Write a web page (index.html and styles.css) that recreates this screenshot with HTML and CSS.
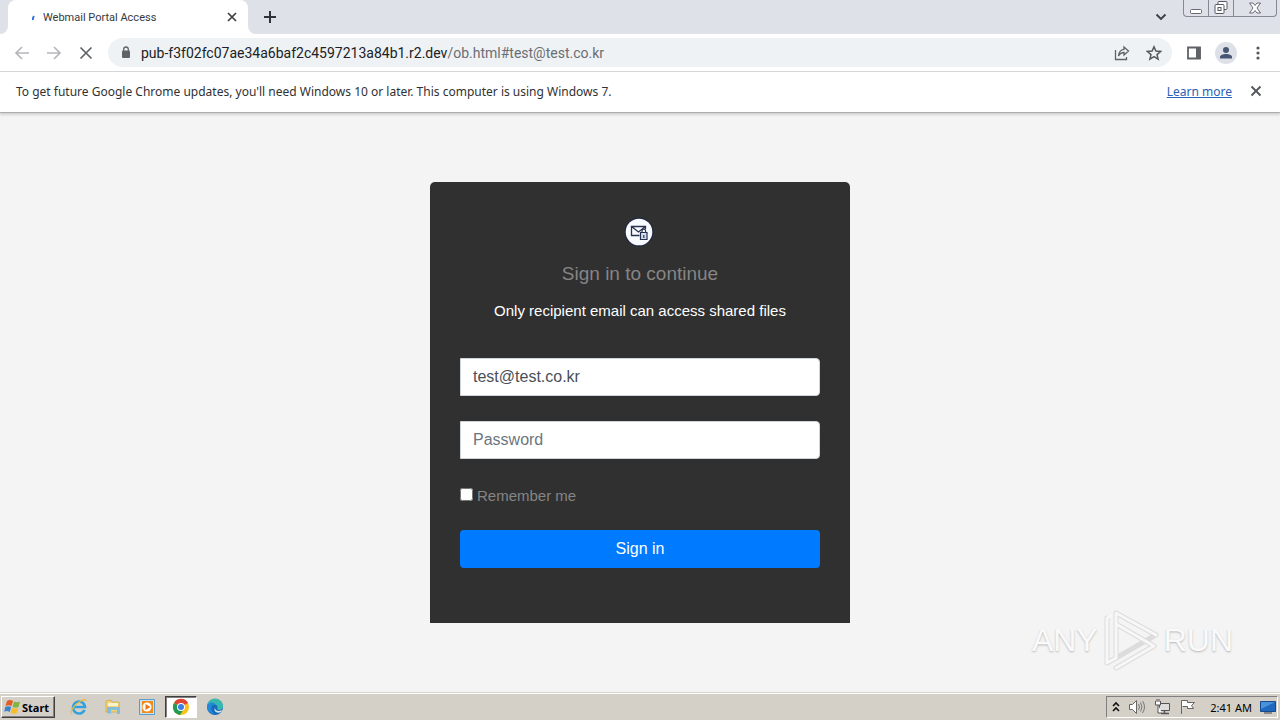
FILE: index.html
```html
<!DOCTYPE html>
<html lang="en">
<head>
<meta charset="utf-8">
<title>Webmail Portal Access</title>
<link rel="stylesheet" href="styles.css">
</head>
<body>
<header class="tabstrip">
  <div class="prev-tab"></div>
  <div class="tab">
    <svg class="spinner" width="16" height="16" viewBox="0 0 16 16"><path d="M6 11Q5.600 9 7 7" fill="none" stroke="#3474d4" stroke-width="2"/></svg>
    <span class="tab-title">Webmail Portal Access</span>
    <button class="icon-btn" aria-label="Close tab"><svg width="10" height="10" viewBox="0 0 10 10"><path d="M1 1l8 8M9 1l-8 8" stroke="#3c4043" stroke-width="1.700"/></svg></button>
  </div>
  <div class="strip-rest">
    <button class="icon-btn" aria-label="New tab"><svg width="14" height="14" viewBox="0 0 14 14"><path d="M7 1v12M1 7h12" stroke="#303338" stroke-width="2"/></svg></button>
    <button class="icon-btn tab-search" aria-label="Search tabs"><svg width="12" height="8" viewBox="0 0 12 8"><path d="M1.500 1.500L6 6l4.500-4.500" fill="none" stroke="#3c4043" stroke-width="1.900"/></svg></button>
    <div class="window-buttons">
      <button class="win-btn" aria-label="Minimize"><svg width="13" height="5" viewBox="0 0 13 5"><rect x=".5" y=".5" width="11" height="4" rx="1" fill="#fff" stroke="#666a73"/></svg></button>
      <button class="win-btn" aria-label="Restore"><svg width="14" height="13" viewBox="0 0 14 13"><g fill="#fff" stroke="#555963"><rect x="4" y=".5" width="9" height="8" rx="1"/><rect x="1" y="3.500" width="9" height="9" rx="1"/><rect x="4" y="6.500" width="3" height="3"/></g></svg></button>
      <button class="win-btn win-close" aria-label="Close"><svg width="14" height="12" viewBox="0 0 14 12"><path d="M1.500 1h3.500l2 2.500L9 1h3.500L9 6l3.500 5H9L7 8.500 5 11H1.500L5 6z" fill="#fff" stroke="#666a73"/></svg></button>
    </div>
  </div>
</header>
<nav class="toolbar">
  <button class="icon-btn" aria-label="Back"><svg width="16" height="16" viewBox="0 0 16 16"><path d="M15 8H2M8 2L2 8l6 6" fill="none" stroke="#b5b7ba" stroke-width="1.700"/></svg></button>
  <button class="icon-btn" aria-label="Forward"><svg width="16" height="16" viewBox="0 0 16 16"><path d="M1 8h13M8 2l6 6-6 6" fill="none" stroke="#b5b7ba" stroke-width="1.700"/></svg></button>
  <button class="icon-btn" aria-label="Stop"><svg width="16" height="16" viewBox="0 0 16 16"><path d="M2.500 2.500l11 11M13.500 2.500l-11 11" stroke="#5f6368" stroke-width="1.700"/></svg></button>
  <div class="omnibox">
    <svg width="10" height="13" viewBox="0 0 10 13"><rect x="1" y="4.500" width="8" height="7.500" rx="1" fill="#5f6368"/><path d="M2.700 5V3.300a2.300 2.300 0 0 1 4.600 0V5" fill="none" stroke="#5f6368" stroke-width="1.300"/></svg>
    <span class="url">pub-f3f02fc07ae34a6baf2c4597213a84b1.r2.dev<span class="url-path">/ob.html#test@test.co.kr</span></span>
    <button class="icon-btn" aria-label="Share"><svg width="16" height="16" viewBox="0 0 16 16"><path d="M1.500 5v9.500h11V12M10 2l4.500 4L10 10V7.500Q6.500 7.500 4.500 11 5 5 10 4.300z" fill="none" stroke="#5f6368" stroke-width="1.300"/></svg></button>
    <button class="icon-btn" aria-label="Bookmark"><svg width="16" height="16" viewBox="0 0 16 16"><path d="M8 1.800l1.900 4.300 4.700.4-3.600 3.100 1.100 4.600L8 11.700l-4.100 2.500L5 9.600 1.400 6.500l4.700-.4z" fill="none" stroke="#55585d" stroke-width="1.500"/></svg></button>
  </div>
  <button class="icon-btn" aria-label="Side panel"><svg width="16" height="16" viewBox="0 0 16 16"><path d="M2 2.500h12v11H2z" fill="none" stroke="#5f6368" stroke-width="1.800"/><path d="M10 2h4.500v12H10z" fill="#5f6368"/></svg></button>
  <button class="icon-btn" aria-label="Profile"><svg width="22" height="22" viewBox="0 0 22 22"><circle cx="11" cy="11" r="11" fill="#dde1e7"/><circle cx="11" cy="8" r="3" fill="#485575"/><path d="M5 16.500v-1.500c0-2 3-3 6-3s6 1 6 3v1.500z" fill="#485575"/></svg></button>
  <button class="icon-btn" aria-label="Menu"><svg width="16" height="16" viewBox="0 0 16 16" fill="#55585d"><circle cx="8" cy="3" r="1.600"/><circle cx="8" cy="8" r="1.600"/><circle cx="8" cy="13" r="1.600"/></svg></button>
</nav>
<aside class="infobar">
  <p class="infobar-text">To get future Google Chrome updates, you'll need Windows 10 or later. This computer is using Windows 7.</p>
  <a class="learn-more" href="#">Learn more</a>
  <button class="icon-btn" aria-label="Dismiss"><svg width="12" height="12" viewBox="0 0 12 12"><path d="M1.500 1.500l9 9M10.500 1.500l-9 9" stroke="#55585d" stroke-width="1.900"/></svg></button>
</aside>
<main class="page">
  <form class="card">
    <svg class="logo" width="30" height="30" viewBox="0 0 30 30"><circle cx="15" cy="15" r="14.500" fill="#1d2942"/><circle cx="15" cy="15" r="13.300" fill="#f8faff"/><path d="M15.500 18.500H7.500v-9h14V12M7.500 9.500l7 5.500 7-5.500" fill="none" stroke="#26334f" stroke-width="1.300"/><path d="M16.500 15.500h6.500v7h-6.500z" fill="#d5dcec" stroke="#26334f" stroke-width="1.200"/><path d="M18 15.500V14a1.800 1.800 0 0 1 3.600 0v1.500M19.800 18v3" fill="none" stroke="#26334f" stroke-width="1.200"/></svg>
    <h1 class="title">Sign in to continue</h1>
    <p class="subtitle">Only recipient email can access shared files</p>
    <input class="field" type="email" aria-label="Email" value="test@test.co.kr">
    <input class="field" type="password" aria-label="Password" placeholder="Password">
    <label class="remember"><input class="check" type="checkbox">Remember me</label>
    <button class="submit" type="submit">Sign in</button>
  </form>
  <div class="watermark">
    <span>ANY</span>
    <svg width="58" height="64" viewBox="0 0 58 64"><g fill="none" stroke-linejoin="round" stroke-linecap="round"><path d="M14 50V5l40 22M14 16l38 22M5 10v45M5 55l9-5 38-22M14 60l38-22" stroke="#dcdcdc" stroke-width="5"/><path d="M14 50V5l40 22M14 16l38 22M9 8l-4 2v45l9-5M14 60l38-22" stroke="#f7f7f7" stroke-width="3"/></g></svg>
    <span>RUN</span>
  </div>
</main>
<footer class="taskbar">
  <button class="start"><svg width="17" height="16" viewBox="0 0 17 16"><path d="M3 2q3-2 6 0L7.500 7q-3-1.500-6 0z" fill="#e65c24"/><path d="M10 2.500q3 1.500 6 0L14.500 8q-3 1-6 0z" fill="#7fb540"/><path d="M1.200 8q3-1.500 6 0l-1.500 5q-3-2-5.500 0z" fill="#3b83cf"/><path d="M8.200 9q3 1.200 6 0l-1.500 5q-3 1.500-6 0z" fill="#f4bd2c"/></svg>Start</button>
  <div class="launchers">
    <button class="launcher" aria-label="Internet Explorer"><svg width="18" height="18" viewBox="0 0 18 18"><path d="M14.500 12a6 6 0 1 1 .5-3H4" fill="none" stroke="#32a1df" stroke-width="2.600"/><path d="M2 16C-1 14 4 7 10 3.500c3-2 6-2.500 6-.5" fill="none" stroke="#e9bd3c" stroke-width="1.300"/></svg></button>
    <button class="launcher" aria-label="Explorer"><svg width="18" height="18" viewBox="0 0 18 18"><path d="M2 3l5-1 1 2h7v10H2z" fill="#f1d477" stroke="#c9a343" stroke-width=".7"/><path d="M4 5h10v3H4z" fill="#faf3ce"/><path d="M3 15V9h13v7h-3v-4H7v4z" fill="#83bddd"/></svg></button>
    <button class="launcher" aria-label="Media Player"><svg width="18" height="18" viewBox="0 0 18 18"><path d="M1.500 1.500h15v15h-15z" fill="#c8e3f5" stroke="#5a9dcb"/><path d="M4 3h11v12H4z" fill="#f38b19"/><circle cx="9" cy="9" r="4.500" fill="#fff"/><path d="M7.500 6l5 3-5 3z" fill="#ef7710"/></svg></button>
    <button class="launcher active" aria-label="Chrome"><svg width="18" height="18" viewBox="0 0 18 18"><circle cx="9" cy="9" r="8" fill="#fbc116"/><path d="M9 9L2 5a8 8 0 0 1 14 0z" fill="#df4437"/><path d="M9 9L2 5a8 8 0 0 0 6 12l4-6z" fill="#239b52"/><circle cx="9" cy="9" r="4" fill="#fff"/><circle cx="9" cy="9" r="3" fill="#3c7de6"/></svg></button>
    <button class="launcher" aria-label="Edge"><svg width="18" height="18" viewBox="0 0 18 18"><circle cx="9" cy="9" r="8" fill="#1769b9"/><path d="M1 9a8 8 0 0 1 16-1c0 4-4 5-6 3 2-3-2-6-5-4-3 1-5 1-5 2z" fill="#37b9ad"/><path d="M1 9c0-5 7-6 9-2-4-2-7 4-2 9-4 0-7-3-7-7z" fill="#2388da"/><path d="M9 10c0 3 4 4 7 2l-1 2c-4 2-8-1-6-4z" fill="#d7e4ed"/></svg></button>
  </div>
  <div class="tray">
    <svg width="8" height="12" viewBox="0 0 8 12"><path d="M1 5l3-3 3 3M1 10l3-3 3 3" fill="none" stroke="#111" stroke-width="1.600"/></svg>
    <svg width="18" height="16" viewBox="0 0 18 16"><path d="M1.500 5.500h3l4-4v13l-4-4h-3z" fill="#fff" stroke="#666"/><path d="M10.500 5q2 3 0 6M12.500 3.500q3 4.500 0 9M14.500 2q4 6 0 12" fill="none" stroke="#777"/></svg>
    <svg width="17" height="16" viewBox="0 0 17 16"><path d="M5.500 4.500h10v7h-10z" fill="#ddd" stroke="#555"/><path d="M7 14.500h8M10.500 12v2" stroke="#555" stroke-width="1.500"/><path d="M1.500 2v4h5V2M3 0v3M5 0v3M4 6v8h4" fill="#fff" stroke="#555"/></svg>
    <svg width="17" height="16" viewBox="0 0 17 16"><path d="M2.500 15V1.500h6v2h7l-3 3 2 3H8.500v-2h-5" fill="#fff" stroke="#666"/></svg>
    <time class="clock">2:41 AM</time>
    <svg width="16" height="14" viewBox="0 0 16 14"><path d="M.5 1.500h15v10H.5z" fill="#2169bf" stroke="#154b8e"/><path d="M1 2h14L1 9z" fill="#4a93db"/><path d="M4 13h8" stroke="#888" stroke-width="2"/></svg>
  </div>
</footer>
</body>
</html>
```
FILE: styles.css
```css
* { box-sizing: border-box; }
body {
  margin: 0;
  min-height: 100vh;
  display: flex;
  flex-direction: column;
  font-family: "Liberation Sans", Arial, sans-serif;
  background: #f4f4f4;
}
svg { display: block; flex: none; }
.icon-btn {
  display: flex;
  align-items: center;
  justify-content: center;
  padding: 0;
  border: 0;
  background: none;
}
.tabstrip { display: flex; height: 34px; background: #fff; }
.prev-tab { width: 8px; background: #dee1e8; border-bottom-right-radius: 8px; }
.tab {
  display: flex;
  align-items: center;
  width: 240px;
  padding: 0 11px 0 19px;
  background: #fff;
  box-shadow: 0 -8px 0 #dee1e8;
  border-radius: 8px 8px 0 0;
}
.tab-title {
  flex: 1;
  font: 11px Roboto, sans-serif;
  color: #36393d;
  white-space: nowrap;
}
.strip-rest {
  flex: 1;
  display: flex;
  padding: 0 3px 0 15px;
  background: #dee1e8;
  border-bottom-left-radius: 8px;
}
.tab-search { margin: 0 16px 0 auto; }
.window-buttons {
  display: flex;
  height: 17px;
  border: 1px solid #858993;
  border-top: 0;
  border-radius: 0 0 4px 4px;
}
.win-btn {
  display: flex;
  justify-content: center;
  align-items: flex-end;
  width: 25px;
  padding: 0 0 2px;
  border: 0;
  border-right: 1px solid #858993;
  background: none;
}
.win-close { width: 42px; border-right: 0; }
.toolbar {
  display: flex;
  align-items: center;
  gap: 16px;
  height: 38px;
  padding: 0 14px;
  background: #fff;
  border-bottom: 1px solid #d5d6d8;
}
.toolbar > .icon-btn { width: 16px; height: 22px; }
.omnibox {
  flex: 1;
  display: flex;
  align-items: center;
  gap: 16px;
  height: 29px;
  margin: 0 -2px;
  padding: 0 10px 0 13px;
  border-radius: 15px;
  background: #eff2f5;
}
.url {
  flex: 1;
  margin-left: -6px;
  font: 14px Roboto, sans-serif;
  color: #202124;
  white-space: nowrap;
}
.url-path { color: #6a6e73; }
.infobar {
  display: flex;
  align-items: center;
  height: 41px;
  padding: 0 18px 2px 16px;
  background: #fff;
  border-bottom: 1px solid #adadad;
  box-shadow: 0 2px 2px #d4d4d4;
  font: 12px "Noto Sans", sans-serif;
  color: #303134;
}
.infobar-text { flex: 1; margin: 0; }
.learn-more { margin-right: 18px; color: #2862b5; }
.page {
  position: relative;
  flex: 1;
  padding: 69px 20px;
}
.card {
  display: flex;
  flex-direction: column;
  max-width: 420px;
  margin: 0 auto;
  padding: 35px 30px 55px;
  background: #303030;
  border-radius: 5px 5px 0 0;
}
.logo { align-self: center; margin-right: 2px; }
.title {
  margin: 14px 0 12px;
  font-size: 19px;
  line-height: 26px;
  font-weight: 400;
  text-align: center;
  color: #858585;
}
.subtitle {
  margin: 0 0 35px;
  font-size: 15px;
  line-height: 24px;
  text-align: center;
  color: #fff;
}
.field {
  width: 100%;
  height: 38px;
  margin-bottom: 25px;
  padding: 0 12px;
  border: 1px solid #ced4da;
  border-radius: 0 4px 4px 0;
  background: #fff;
  font: 16px "Liberation Sans", Arial, sans-serif;
  color: #495057;
}
.field::placeholder { color: #6c757d; opacity: 1; }
.remember {
  display: flex;
  align-items: center;
  gap: 4px;
  margin: 0 0 22px;
  font-size: 15px;
  line-height: 24px;
  color: #858585;
}
.check { width: 13px; height: 13px; margin: 0 0 3px; }
.submit {
  height: 38px;
  border: 0;
  border-radius: 4px;
  background: #007bff;
  color: #fff;
  font: 16px "Liberation Sans", Arial, sans-serif;
}
.watermark {
  position: absolute;
  right: 47px;
  bottom: 20px;
  display: flex;
  align-items: center;
  gap: 4px;
  font: 32px "Liberation Sans", sans-serif;
  color: #fafafa;
  text-shadow: 0 1px 2px #b5b5b5;
}
.taskbar {
  display: flex;
  align-items: center;
  height: 28px;
  padding: 2px 2px 1px 1px;
  background: #d4d0c8;
  border-top: 1px solid #d8d5ce;
  box-shadow: inset 0 1px 0 #fff;
}
.start {
  display: flex;
  align-items: center;
  gap: 1px;
  width: 54px;
  height: 22px;
  padding: 0 2px;
  border: 1px solid;
  border-color: #fff #404040 #404040 #fff;
  box-shadow: inset -1px -1px 0 #808080;
  background: #d4d0c8;
  font: bold 11px "Noto Sans", sans-serif;
  color: #000;
}
.launchers { display: flex; flex: 1; gap: 2px; margin-left: 8px; }
.launcher {
  display: flex;
  align-items: center;
  justify-content: center;
  width: 32px;
  height: 22px;
  padding: 0;
  border: 1px solid transparent;
  background: none;
}
.active {
  background: #fff;
  border-color: #404040 #fff #fff #404040;
  box-shadow: inset 1px 1px 0 #808080;
}
.tray {
  display: flex;
  align-items: center;
  gap: 8px;
  height: 22px;
  padding: 0 1px 0 5px;
  border: 1px solid;
  border-color: #808080 #fff #fff #808080;
}
.clock {
  margin: 0 0 0 6px;
  font: 11px "Noto Sans", sans-serif;
  color: #000;
}
```
